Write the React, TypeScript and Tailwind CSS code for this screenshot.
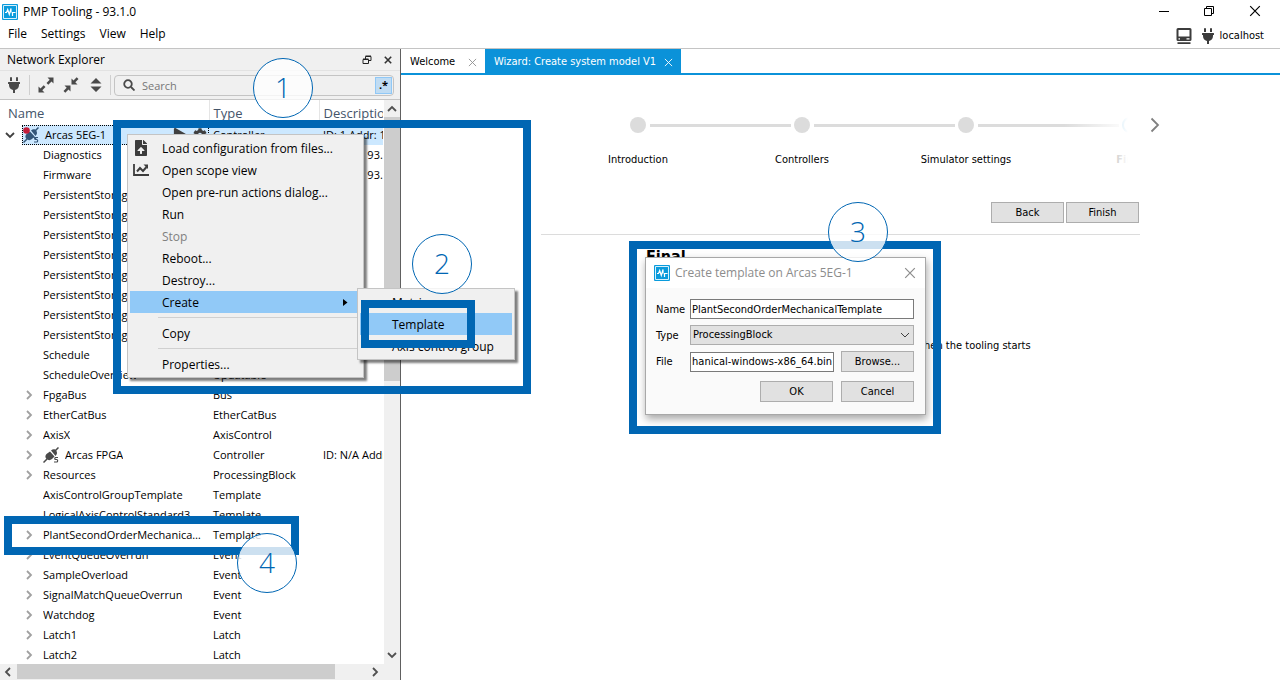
import { ReactNode } from "react";
import { FaCog, FaFileUpload, FaPlay, FaPlug } from "react-icons/fa";

type Row = {
  name: string;
  type?: string;
  description?: string;
  expandable?: boolean;
  icon?: boolean;
};

const storageRows: Row[] = Array.from({ length: 8 }, () => ({ name: "PersistentStorage" }));

const rows: Row[] = [
  { name: "Diagnostics", description: "Version: 93.1" },
  { name: "Firmware", description: "Version: 93.1" },
  ...storageRows,
  { name: "Schedule" },
  { name: "ScheduleOverview", type: "Updatable" },
  { name: "FpgaBus", type: "Bus", expandable: true },
  { name: "EtherCatBus", type: "EtherCatBus", expandable: true },
  { name: "AxisX", type: "AxisControl", expandable: true },
  { name: "Arcas FPGA", type: "Controller", description: "ID: N/A Addr: N/A", expandable: true, icon: true },
  { name: "Resources", type: "ProcessingBlock", expandable: true },
  { name: "AxisControlGroupTemplate", type: "Template" },
  { name: "LogicalAxisControlStandard3", type: "Template" },
  { name: "PlantSecondOrderMechanicalTemplate", type: "Template", expandable: true },
  { name: "EventQueueOverrun", type: "Event", expandable: true },
  { name: "SampleOverload", type: "Event", expandable: true },
  { name: "SignalMatchQueueOverrun", type: "Event", expandable: true },
  { name: "Watchdog", type: "Event", expandable: true },
  { name: "Latch1", type: "Latch", expandable: true },
  { name: "Latch2", type: "Latch", expandable: true },
];

function Logo() {
  return (
    <svg className="size-4 shrink-0" viewBox="0 0 16 16" fill="none">
      <rect width="16" height="16" rx="1" fill="#0a9bdc" />
      <path d="M1.500 14.500v-13h13v13z" stroke="#d5f0fc" />
      <path d="M3 8.500h1.500l1.200-3 1.600 5 1.700-6v4M10.500 12V8.500h3" stroke="#fff" strokeWidth="1.200" />
    </svg>
  );
}

function Chevron({ direction, className = "" }: { direction: "up" | "down" | "left" | "right"; className?: string }) {
  const paths = {
    up: "M1 7l4-4 4 4",
    down: "M1 3l4 4 4-4",
    left: "M7 1L3 5l4 4",
    right: "M3 1l4 4-4 4",
  };
  return (
    <svg className={`size-[10px] shrink-0 ${className}`} viewBox="0 0 10 10" fill="none" stroke="currentColor" strokeWidth="1.800">
      <path d={paths[direction]} />
    </svg>
  );
}

function Cross({ className = "" }: { className?: string }) {
  return (
    <svg className={className} viewBox="0 0 10 10" fill="none" stroke="currentColor">
      <path d="M1 1l8 8M9 1L1 9" />
    </svg>
  );
}

function ControllerIcon({ connected = false }: { connected?: boolean }) {
  return (
    <svg className="size-4 shrink-0" viewBox="0 0 16 16" fill="none">
      <g className={connected ? "text-[#34577a]" : "text-[#4a4a4a]"}>
        <path d="M15.500 0.500L11.500 4.500M0.500 15.500L4 12" stroke="currentColor" strokeWidth="1.500" />
        <path d="M8 3.500c2-2 4.500-1.500 5.500.5 1 2 .5 3.500-1 5zM7 4.500L11.500 9.500 9 12c-1.500 1.500-4 1.500-5.500 0s-1.500-3.500 0-5z" fill="currentColor" />
        {connected && <path d="M3 3l10 9" stroke="currentColor" strokeWidth="1.500" />}
        <path d="M15 10.500h-2.500c-1 0-1 2 0 2h1.200c1.300 0 1.300 2.500 0 2.500H11" stroke="currentColor" strokeWidth="1.200" />
      </g>
      {connected && <circle cx="3.500" cy="3.500" r="3.300" fill="#c41e3a" />}
    </svg>
  );
}

function ExpandIcon() {
  return (
    <svg className="size-4" viewBox="0 0 16 16" fill="currentColor">
      <path d="M9.500.5h6v6l-2-2-3.200 3.200-1.800-1.800 3.200-3.200zM6.500 15.500h-6v-6l2 2 3.200-3.200 1.800 1.800-3.200 3.200z" />
    </svg>
  );
}

function CollapseIcon() {
  return (
    <svg className="size-4" viewBox="0 0 16 16" fill="currentColor">
      <path d="M14.500 7.500h-6v-6l2 2L13.700.3l1.800 1.800-3.200 3.200zM1.500 8.500h6v6l-2-2-3.200 3.200L.5 13.900l3.200-3.200z" />
    </svg>
  );
}

function SortIcon() {
  return (
    <svg className="h-4 w-3" viewBox="0 0 12 16" fill="currentColor">
      <path d="M6 1l5.500 5.500H.5zM6 15L.5 9.500h11z" />
    </svg>
  );
}

function ScopeIcon() {
  return (
    <svg className="size-4" viewBox="0 0 16 16" fill="none" stroke="currentColor">
      <path d="M1 2v11h15" strokeWidth="1.800" />
      <path d="M4 9.500L7 6l3 3 3.500-4" strokeWidth="2" />
      <path d="M10.500 2.500H15V7z" fill="currentColor" stroke="none" />
    </svg>
  );
}

function WindowBar() {
  return (
    <header className="border-b border-[#c4c4c4] bg-white">
      <div className="flex h-6 items-center justify-between pl-[2px] pr-[19px]">
        <div className="flex items-center gap-1">
          <Logo />
          <h1 className="pl-px">PMP Tooling - 93.1.0</h1>
        </div>
        <div className="flex items-center gap-[35px] pb-[2px]">
          <button aria-label="Minimize" className="flex size-[10px] items-center">
            <span className="h-px w-full bg-black" />
          </button>
          <button aria-label="Restore">
            <svg className="size-[10px]" viewBox="0 0 10 10" fill="none" stroke="#000">
              <path d="M.5 2.500h7v7h-7zM2.500 2.500v-2h7v7h-2" />
            </svg>
          </button>
          <button aria-label="Close">
            <Cross className="size-3" />
          </button>
        </div>
      </div>
      <div className="flex h-6 items-center justify-between pl-2 pr-4">
        <nav className="flex gap-[14px] pb-1">
          <button>File</button>
          <button>Settings</button>
          <button>View</button>
          <button>Help</button>
        </nav>
        <div className="flex items-center font-['DejaVu_Sans_Condensed',sans-serif] text-[11px]">
          <svg className="mr-2 size-4" viewBox="0 0 16 16" fill="#3c3c3c">
            <path fillRule="evenodd" d="M2 0h12a1.500 1.500 0 0 1 1.500 1.500v10A1.500 1.500 0 0 1 14 13H2A1.500 1.500 0 0 1 .5 11.500v-10A1.500 1.500 0 0 1 2 0zm.5 2v6.500h11V2zm0 8.300v1.200H4v-1.200zm8 0v1.200h3v-1.200zM1.500 14.200h13V16h-13z" />
          </svg>
          <FaPlug className="mr-1 size-4 text-[#3c3c3c]" />
          localhost
        </div>
      </div>
    </header>
  );
}

function ExplorerTable() {
  const highlighted = "overflow-hidden bg-[#cce8ff] p-0 pl-1";
  const cell = "overflow-hidden p-0 pl-1";
  return (
    <table className="w-[383px] table-fixed border-collapse text-left text-[11px] whitespace-nowrap">
      <colgroup>
        <col className="w-[209px]" />
        <col className="w-[110px]" />
        <col className="w-16" />
      </colgroup>
      <thead>
        <tr className="h-[25px] text-[13px] text-[#44546a]">
          <th className="overflow-hidden border-r border-[#e5e5e5] pl-2 font-normal">Name</th>
          <th className="overflow-hidden border-r border-[#e5e5e5] pl-1 font-normal">Type</th>
          <th className="overflow-hidden pl-1 font-normal">Description</th>
        </tr>
      </thead>
      <tbody>
        <tr className="h-5">
          <td className="p-0">
            <div className="flex h-5 items-center">
              <Chevron direction="down" className="ml-[5px] mr-[7px] text-[#404040]" />
              <div className="flex h-full flex-1 items-center border border-dotted border-black bg-[#cce8ff]">
                <ControllerIcon connected />
                <span className="flex-1 pl-[6px]">Arcas 5EG-1</span>
                <FaPlay className="size-[14px] text-[#404040]" />
                <FaCog className="ml-[6px] mr-px size-[14px] text-[#404040]" />
              </div>
            </div>
          </td>
          <td className={highlighted}>Controller</td>
          <td className={highlighted}>ID: 1 Addr: 127.0.0.1</td>
        </tr>
        {rows.map((row, i) => (
          <tr key={i} className="h-5">
            <td className="p-0">
              <div className="flex h-5 items-center pl-6 pr-2">
                {row.expandable ? (
                  <Chevron direction="right" className="mr-[9px] text-[#a0a0a0]" />
                ) : (
                  <span className="mr-[9px] w-[10px] shrink-0" />
                )}
                {row.icon && (
                  <span className="mr-[6px]">
                    <ControllerIcon />
                  </span>
                )}
                <span className="truncate">{row.name}</span>
              </div>
            </td>
            <td className={cell}>{row.type}</td>
            <td className={cell}>{row.description}</td>
          </tr>
        ))}
      </tbody>
    </table>
  );
}

function NetworkExplorer() {
  return (
    <aside className="flex w-[401px] shrink-0 flex-col border-r border-[#606060] bg-[#f0f0f0]">
      <div className="flex h-[22px] shrink-0 items-center justify-between border-b border-[#e2e2e2] pl-[7px] pr-2">
        <h2>Network Explorer</h2>
        <div className="flex items-center gap-3">
          <button aria-label="Float panel">
            <svg className="size-[10px]" viewBox="0 0 10 10" fill="none" stroke="#222">
              <path d="M1 4.500h5.500v4H1zM3.500 4V1.500H9v4H7M1 4h5.500M3.500 1H9" />
            </svg>
          </button>
          <button aria-label="Close panel">
            <Cross className="size-2 stroke-[2px] text-[#333]" />
          </button>
        </div>
      </div>
      <div className="flex h-[29px] shrink-0 items-center border-b border-[#c4c4c4] pl-[6px] pr-[6px] text-[#4a4a4a]">
        <button aria-label="Connect">
          <FaPlug className="size-4" />
        </button>
        <span className="ml-[7px] mr-2 h-5 w-px bg-[#cfcfcf]" />
        <button aria-label="Expand all">
          <ExpandIcon />
        </button>
        <button aria-label="Collapse all" className="ml-[9px]">
          <CollapseIcon />
        </button>
        <button aria-label="Sort" className="ml-[11px]">
          <SortIcon />
        </button>
        <span className="ml-2 mr-[3px] h-5 w-px bg-[#cfcfcf]" />
        <label className="flex h-[21px] flex-1 items-center rounded-sm border border-[#c4c4c4] pl-2 pr-px">
          <svg className="size-3 shrink-0" viewBox="0 0 12 12" fill="none" stroke="currentColor" strokeWidth="1.800">
            <circle cx="5" cy="5" r="3.800" />
            <path d="M8 8l3.500 3.500" />
          </svg>
          <input aria-label="Search" placeholder="Search" className="w-0 flex-1 pt-px pl-[7px] text-[11px] outline-none placeholder:text-[#777]" />
          <button aria-label="Use regular expression" className="h-[17px] w-[17px] border border-[#90c8f6] bg-[#c0dcf3] text-[11px] leading-[14px] font-bold text-black">
            .*
          </button>
        </label>
      </div>
      <div className="flex min-h-0 flex-1">
        <div className="min-w-0 flex-1 overflow-hidden bg-white">
          <ExplorerTable />
        </div>
        <div className="flex w-4 shrink-0 flex-col items-center text-[#505050]">
          <div className="flex h-[17px] items-center">
            <Chevron direction="up" />
          </div>
          <div className="h-[264px] w-full bg-[#cdcdcd]" />
          <div className="flex flex-1 items-end pb-1">
            <Chevron direction="down" />
          </div>
        </div>
      </div>
      <div className="flex h-4 shrink-0 items-center pb-px text-[#505050]">
        <Chevron direction="left" className="mx-[3px]" />
        <div className="ml-px h-full w-[318px] bg-[#cdcdcd]" />
        <Chevron direction="right" className="ml-auto mr-5" />
      </div>
    </aside>
  );
}

function PushButton({ children }: { children: ReactNode }) {
  return <button className="h-[21px] w-[73px] border border-[#adadad] bg-[#e1e1e1]">{children}</button>;
}

function Wizard() {
  return (
    <main className="flex min-w-0 flex-1 flex-col bg-white font-['DejaVu_Sans_Condensed',sans-serif] text-[11px]">
      <div className="flex h-[26px] shrink-0 border-b-2 border-[#0b92d9]">
        <button className="flex h-6 w-[84px] items-center justify-between pt-[2px] pl-[9px] pr-2">
          Welcome
          <Cross className="size-[9px] text-[#909090]" />
        </button>
        <button className="flex h-6 w-[196px] items-center justify-between bg-[#0b92d9] pt-[2px] pl-[9px] pr-2 text-white">
          Wizard: Create system model V1
          <Cross className="size-[9px]" />
        </button>
      </div>
      <div className="mx-auto w-full max-w-[599px]">
        <div className="relative flex h-[100px] pt-[42px]">
          <ol className="relative flex w-[587px] overflow-hidden pl-[15px]">
            {["Introduction", "Controllers", "Simulator settings"].map((step) => (
              <li key={step} className="relative w-[164px] shrink-0 text-center">
                <span className="mx-auto block size-4 rounded-full bg-[#dcdcdc]" />
                <span className="absolute top-[7px] left-[94px] h-[3px] w-[141px] bg-[#dcdcdc]" />
                <span className="mt-[19px] block leading-4">{step}</span>
              </li>
            ))}
            <li className="w-[164px] shrink-0 text-center font-bold">
              <span className="mx-auto block size-4 rounded-full border-2 border-[#0b92d9]" />
              <span className="mt-[19px] block leading-4">Final</span>
            </li>
            <li aria-hidden="true" className="absolute top-0 right-0 h-full w-16 bg-linear-to-r from-white/0 to-white" />
          </ol>
          <button aria-label="Next step" className="absolute top-[42px] -right-5 text-[#808080]">
            <svg className="h-4 w-[10px]" viewBox="0 0 10 16" fill="none" stroke="currentColor" strokeWidth="1.800">
              <path d="M1.500 1.500L8 8l-6.500 6.500" />
            </svg>
          </button>
        </div>
        <div className="flex justify-end gap-[2px] border-b border-[#dcdcdc] pt-[27px] pr-px pb-[11px]">
          <PushButton>Back</PushButton>
          <PushButton>Finish</PushButton>
        </div>
        <div className="pl-[105px] pt-3">
          <h2 className="text-base leading-5 font-bold">Final</h2>
          <p className="pt-[71px] pl-[270px] leading-4">when the tooling starts</p>
        </div>
      </div>
    </main>
  );
}

type MenuItemProps = {
  children: ReactNode;
  icon?: ReactNode;
  active?: boolean;
  disabled?: boolean;
  submenu?: boolean;
};

function MenuItem({ children, icon, active, disabled, submenu }: MenuItemProps) {
  return (
    <button
      disabled={disabled}
      className={`flex h-[22px] w-full items-center text-left ${active ? "bg-[#91c9f7]" : ""} ${disabled ? "text-[#808080]" : ""}`}
    >
      <span className="flex w-8 shrink-0 pl-[3px] text-[#3c3c3c]">{icon}</span>
      <span className="flex-1 pt-[2px]">{children}</span>
      {submenu && (
        <svg className="mr-3 size-[7px]" viewBox="0 0 7 7">
          <path d="M1 0l4.500 3.500L1 7z" />
        </svg>
      )}
    </button>
  );
}

function MenuSeparator() {
  return <hr className="my-1 ml-7 border-[#d0d0d0]" />;
}

function ContextMenus() {
  const menu = "absolute border border-[#c4c4c4] bg-[#f0f0f0] p-[2px] shadow-[3px_3px_2px_rgba(0,0,0,0.5)]";
  return (
    <>
      <div className={`${menu} top-[134px] left-[127px] w-[237px]`}>
        <MenuItem icon={<FaFileUpload className="size-4" />}>Load configuration from files...</MenuItem>
        <MenuItem icon={<ScopeIcon />}>Open scope view</MenuItem>
        <MenuItem>Open pre-run actions dialog...</MenuItem>
        <MenuItem>Run</MenuItem>
        <MenuItem disabled>Stop</MenuItem>
        <MenuItem>Reboot...</MenuItem>
        <MenuItem>Destroy...</MenuItem>
        <MenuItem active submenu>Create</MenuItem>
        <MenuSeparator />
        <MenuItem>Copy</MenuItem>
        <MenuSeparator />
        <MenuItem>Properties...</MenuItem>
      </div>
      <div className={`${menu} top-[288px] left-[357px] w-[158px]`}>
        <MenuItem>Metrics</MenuItem>
        <MenuItem active>Template</MenuItem>
        <MenuItem>Axis control group</MenuItem>
      </div>
    </>
  );
}

function TemplateDialog() {
  const field = "h-5 w-full min-w-0 border border-[#7a7a7a] bg-white px-px outline-none";
  return (
    <div
      role="dialog"
      aria-labelledby="dialog-title"
      className="absolute top-[257px] left-[645px] w-[281px] border border-[#a8a8a8] bg-[#fafafa] font-['DejaVu_Sans_Condensed',sans-serif] text-[11px] shadow-[1px_4px_8px_rgba(0,0,0,0.35)]"
    >
      <div className="flex h-[30px] items-center bg-white pl-2 pr-[9px] font-['Open_Sans',sans-serif] text-xs text-[#8c8c8c]">
        <Logo />
        <h2 id="dialog-title" className="flex-1 pl-[5px]">Create template on Arcas 5EG-1</h2>
        <button aria-label="Close dialog">
          <Cross className="size-3" />
        </button>
      </div>
      <form className="pt-[11px] pr-[11px] pb-3 pl-[10px]" onSubmit={(e) => e.preventDefault()}>
        <div className="grid grid-cols-[34px_1fr] items-center gap-y-[6px]">
          <label htmlFor="name" className="pt-px">Name</label>
          <input id="name" className={field} defaultValue="PlantSecondOrderMechanicalTemplate" />
          <label htmlFor="type" className="pt-px">Type</label>
          <div className="relative flex">
            <select id="type" className="h-5 w-full appearance-none border border-[#adadad] bg-[#e1e1e1] pl-[2px]">
              <option>ProcessingBlock</option>
            </select>
            <Chevron direction="down" className="pointer-events-none absolute top-[5px] right-1 stroke-1 text-[#404040]" />
          </div>
          <label htmlFor="file" className="pt-px">File</label>
          <div className="flex items-center gap-[7px]">
            <input id="file" dir="rtl" className={`${field} flex-1`} defaultValue="OrderMechanical-windows-x86_64.bin" />
            <PushButton>Browse...</PushButton>
          </div>
        </div>
        <div className="flex justify-end gap-2 pt-[9px]">
          <PushButton>OK</PushButton>
          <PushButton>Cancel</PushButton>
        </div>
      </form>
    </div>
  );
}

function Annotations() {
  const frame = "pointer-events-none absolute border-8 border-[#0066b3]";
  const badge =
    "pointer-events-none absolute flex size-[60px] items-center justify-center rounded-full border border-[#0066b3] bg-white/80 pb-[2px] text-[28px] font-light text-[#0066b3]";
  return (
    <>
      <div className={`${frame} top-[120px] left-[113px] h-[274px] w-[418px]`} />
      <div className={`${frame} top-[300px] left-[361px] h-12 w-[114px]`} />
      <div className={`${frame} top-[241px] left-[629px] h-[193px] w-[312px]`} />
      <div className={`${frame} top-[516px] left-1 h-[39px] w-[295px]`} />
      <div className={`${badge} top-[58px] left-[253px]`}>1</div>
      <div className={`${badge} top-[234px] left-[412px]`}>2</div>
      <div className={`${badge} top-[202px] left-[828px]`}>3</div>
      <div className={`${badge} top-[533px] left-[237px]`}>4</div>
    </>
  );
}

export default function App() {
  return (
    <div className="relative flex h-screen flex-col overflow-hidden bg-white font-['Open_Sans',sans-serif] text-xs leading-4 text-black">
      <WindowBar />
      <div className="flex min-h-0 flex-1">
        <NetworkExplorer />
        <Wizard />
      </div>
      <ContextMenus />
      <TemplateDialog />
      <Annotations />
    </div>
  );
}
